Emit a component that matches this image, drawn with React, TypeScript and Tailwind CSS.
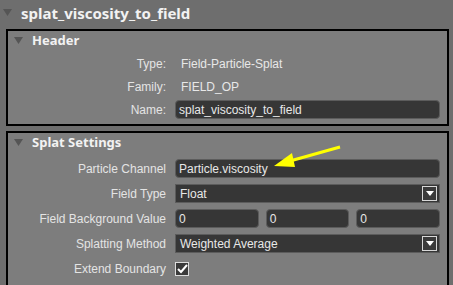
import React from 'react';

const FONT = { fontFamily: '"Noto Sans", "Noto Sans CJK JP", "Liberation Sans", sans-serif' };
const LABEL_FONT = { fontFamily: '"Liberation Sans", "Noto Sans CJK JP", sans-serif' };

function Tri({ className = '' }: { className?: string }) {
  return (
    <svg width="9" height="7" viewBox="0 0 9 7" className={className}>
      <path d="M0 0 L9 0 L4.5 7 Z" fill="#555" />
    </svg>
  );
}

function Field({ children, w = 'flex-1' }: { children?: React.ReactNode; w?: string }) {
  return (
    <div
      className={`${w} flex h-[19px] items-center rounded-[4px] border border-[#5c5c5c] bg-[#363636] px-[3px] text-[12px] text-[#e8e8e8]`}
      style={LABEL_FONT}
    >
      {children}
    </div>
  );
}

function Select({ value }: { value: string }) {
  return (
    <div
      className="flex h-[19px] flex-1 items-center border border-[#5c5c5c] bg-[#363636] pl-[4px] pr-[2px] text-[12px] text-[#e8e8e8]"
      style={LABEL_FONT}
    >
      <span className="flex-1">{value}</span>
      <div className="flex h-[15px] w-[15px] items-center justify-center border border-[#d8d8d8] bg-[#3a3a3a]">
        <svg width="8" height="5" viewBox="0 0 8 5">
          <path d="M0 0 L8 0 L4 5 Z" fill="#fff" />
        </svg>
      </div>
    </div>
  );
}

function Row({ label, children }: { label: string; children: React.ReactNode }) {
  return (
    <div className="flex h-[25px] items-center">
      <div className="w-[167px] pr-[9px] text-right text-[12px] text-[#e4e4e4]" style={LABEL_FONT}>
        {label}
      </div>
      <div className="flex flex-1 items-center gap-[7px] pr-[7px]">{children}</div>
    </div>
  );
}

function Info({ label, value }: { label: string; value: string }) {
  return (
    <div className="flex h-[23px] items-center" style={LABEL_FONT}>
      <div className="w-[167px] pr-[9px] text-right text-[12px] text-[#e4e4e4]">{label}</div>
      <div className="pl-[6px] text-[12px] text-[#e8e8e8]">{value}</div>
    </div>
  );
}

export default function App() {
  return (
    <div className="relative h-[285px] w-[453px] overflow-hidden bg-[#6e6e6e]" style={FONT}>
      <div className="flex h-[27px] items-center gap-[9px] pl-[3px]">
        <Tri className="mt-[-2px]" />
        <span className="text-[15px] font-bold text-[#f2f2f2]">splat_viscosity_to_field</span>
      </div>

      <div className="ml-[6px] mr-[4px] mt-[2px] h-[97px] border-2 border-black bg-[#7d7d7d]">
        <div className="flex h-[19px] items-center gap-[9px] pl-[6px]">
          <Tri />
          <span className="text-[13px] font-bold text-[#f2f2f2]">Header</span>
        </div>
        <div className="pt-[2px]">
          <Info label="Type:" value="Field-Particle-Splat" />
          <Info label="Family:" value="FIELD_OP" />
          <div className="flex h-[23px] items-center" style={LABEL_FONT}>
            <div className="w-[167px] pr-[9px] text-right text-[12px] text-[#e4e4e4]">Name:</div>
            <div className="flex flex-1 pr-[7px]">
              <Field>splat_viscosity_to_field</Field>
            </div>
          </div>
        </div>
      </div>

      <div className="ml-[6px] mr-[4px] mt-[5px] h-[160px] border-2 border-black bg-[#7d7d7d]">
        <div className="flex h-[19px] items-center gap-[9px] pl-[6px]">
          <Tri />
          <span className="text-[13px] font-bold text-[#f2f2f2]">Splat Settings</span>
        </div>
        <div className="pt-[4px]">
          <Row label="Particle Channel">
            <Field>Particle.viscosity</Field>
          </Row>
          <Row label="Field Type">
            <Select value="Float" />
          </Row>
          <Row label="Field Background Value">
            <Field>0</Field>
            <Field>0</Field>
            <Field>0</Field>
          </Row>
          <Row label="Splatting Method">
            <Select value="Weighted Average" />
          </Row>
          <Row label="Extend Boundary">
            <div className="flex h-[14px] w-[14px] items-center justify-center border border-[#ddd] bg-[#3a3a3a]">
              <svg width="11" height="10" viewBox="0 0 11 10">
                <path d="M1 5 L4 8 L10 1" stroke="#fff" strokeWidth="2" fill="none" />
              </svg>
            </div>
          </Row>
        </div>
      </div>

      <svg className="absolute left-0 top-0" width="453" height="285" viewBox="0 0 453 285">
        <line x1="340" y1="147" x2="290" y2="161" stroke="#ffff00" strokeWidth="3" />
        <path d="M274 166 L292 153 L295 167 Z" fill="#ffff00" />
      </svg>
    </div>
  );
}
